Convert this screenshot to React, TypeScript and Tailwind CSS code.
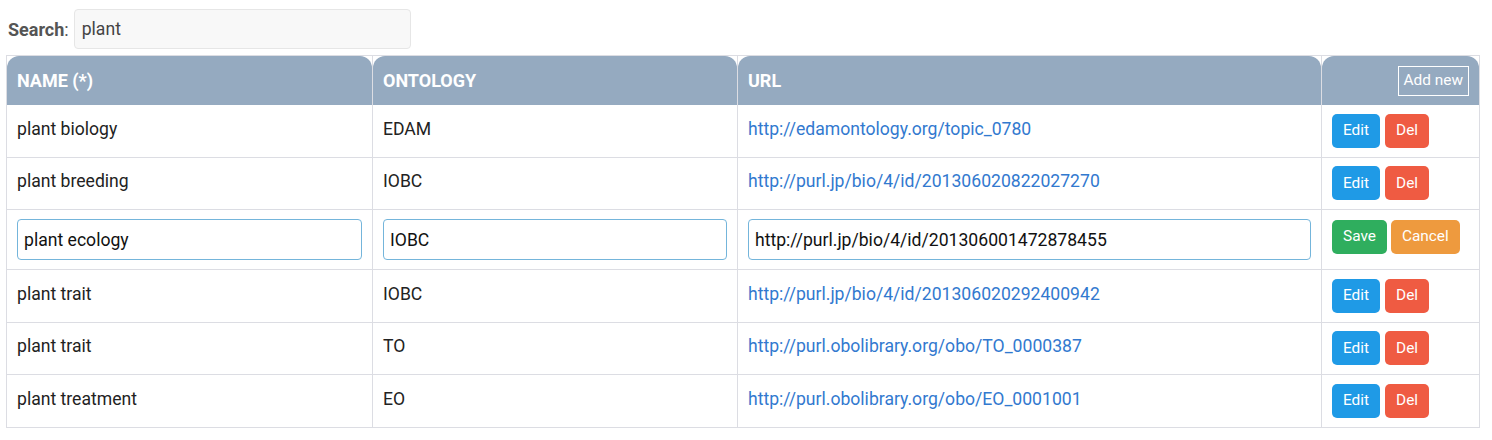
import React from 'react';

type Row = { name: string; ontology: string; url: string; editing?: boolean };

const rows: Row[] = [
  { name: 'plant biology', ontology: 'EDAM', url: 'http://edamontology.org/topic_0780' },
  { name: 'plant breeding', ontology: 'IOBC', url: 'http://purl.jp/bio/4/id/201306020822027270' },
  { name: 'plant ecology', ontology: 'IOBC', url: 'http://purl.jp/bio/4/id/201306001472878455', editing: true },
  { name: 'plant trait', ontology: 'IOBC', url: 'http://purl.jp/bio/4/id/201306020292400942' },
  { name: 'plant trait', ontology: 'TO', url: 'http://purl.obolibrary.org/obo/TO_0000387' },
  { name: 'plant treatment', ontology: 'EO', url: 'http://purl.obolibrary.org/obo/EO_0001001' },
];

const th = 'p-0 border-r border-t border-[#dcdde3] align-top';
const td = 'px-[10px] border-r border-b border-[#dcdde3] align-middle';
const btn = 'h-[34px] rounded-[5px] px-[11px] text-[15.4px] text-white leading-none';

const HeadCell = ({ children, right }: { children?: React.ReactNode; right?: boolean }) => (
  <div
    className={`h-[49px] rounded-t-[12px] bg-[#95aac0] px-[10px] flex items-center ${
      right ? 'justify-end' : ''
    } text-white font-bold text-[18px]`}
  >
    {children}
  </div>
);

const EditInput = ({ value }: { value: string }) => (
  <input
    readOnly
    value={value}
    className="w-full h-[41px] rounded-[4px] border border-[#74b5db] px-[6px] text-[17.6px] text-[#111] bg-white outline-none"
  />
);

export default function App() {
  return (
    <div className="bg-white min-h-[440px] pl-[6px] pt-[9px] text-[#222] font-['Roboto',sans-serif]">
      {/* Search box */}
      <div className="flex items-center gap-[5px] pl-[2px]">
        <span className="text-[18px] text-[#555]">
          <span className="font-bold">Search</span>:
        </span>
        <input
          readOnly
          value="plant"
          className="w-[337px] h-[40px] rounded-[4px] border border-[#e6e6e6] bg-[#f8f8f8] px-[7px] text-[17.6px] text-[#444] outline-none"
        />
      </div>

      <table className="mt-[6px] w-[1473px] table-fixed border-separate border-spacing-0 border-l border-[#dcdde3]">
        <colgroup>
          <col className="w-[366px]" />
          <col className="w-[365px]" />
          <col className="w-[584px]" />
          <col className="w-[158px]" />
        </colgroup>
        <thead>
          <tr>
            <th className={th}>
              <HeadCell>NAME (*)</HeadCell>
            </th>
            <th className={th}>
              <HeadCell>ONTOLOGY</HeadCell>
            </th>
            <th className={th}>
              <HeadCell>URL</HeadCell>
            </th>
            <th className={th}>
              <HeadCell right>
                <span className="border border-white px-[5px] h-[30px] flex items-center font-normal text-[15.4px]">
                  Add new
                </span>
              </HeadCell>
            </th>
          </tr>
        </thead>
        <tbody>
          {rows.map((r, i) =>
            r.editing ? (
              <tr key={i} className="h-[60px]">
                <td className={td}>
                  <EditInput value={r.name} />
                </td>
                <td className={td}>
                  <EditInput value={r.ontology} />
                </td>
                <td className={td}>
                  <EditInput value={r.url} />
                </td>
                <td className={td}>
                  <div className="flex gap-[4px] pb-[6px]">
                    <button className={`${btn} bg-[#2fae5e]`}>Save</button>
                    <button className={`${btn} bg-[#ee9a3e]`}>Cancel</button>
                  </div>
                </td>
              </tr>
            ) : (
              <tr key={i} className="h-[52.5px]">
                <td className={`${td} text-[17.6px]`}>
                  <span className="relative -top-[2px]">{r.name}</span>
                </td>
                <td className={`${td} text-[17.6px]`}>
                  <span className="relative -top-[2px]">{r.ontology}</span>
                </td>
                <td className={`${td} text-[17.6px]`}>
                  <a href="#" className="relative -top-[2px] text-[#3279cf]">
                    {r.url}
                  </a>
                </td>
                <td className={td}>
                  <div className="flex gap-[5px]">
                    <button className={`${btn} bg-[#1f9ae6]`}>Edit</button>
                    <button className={`${btn} bg-[#ef5b42]`}>Del</button>
                  </div>
                </td>
              </tr>
            )
          )}
        </tbody>
      </table>
    </div>
  );
}
